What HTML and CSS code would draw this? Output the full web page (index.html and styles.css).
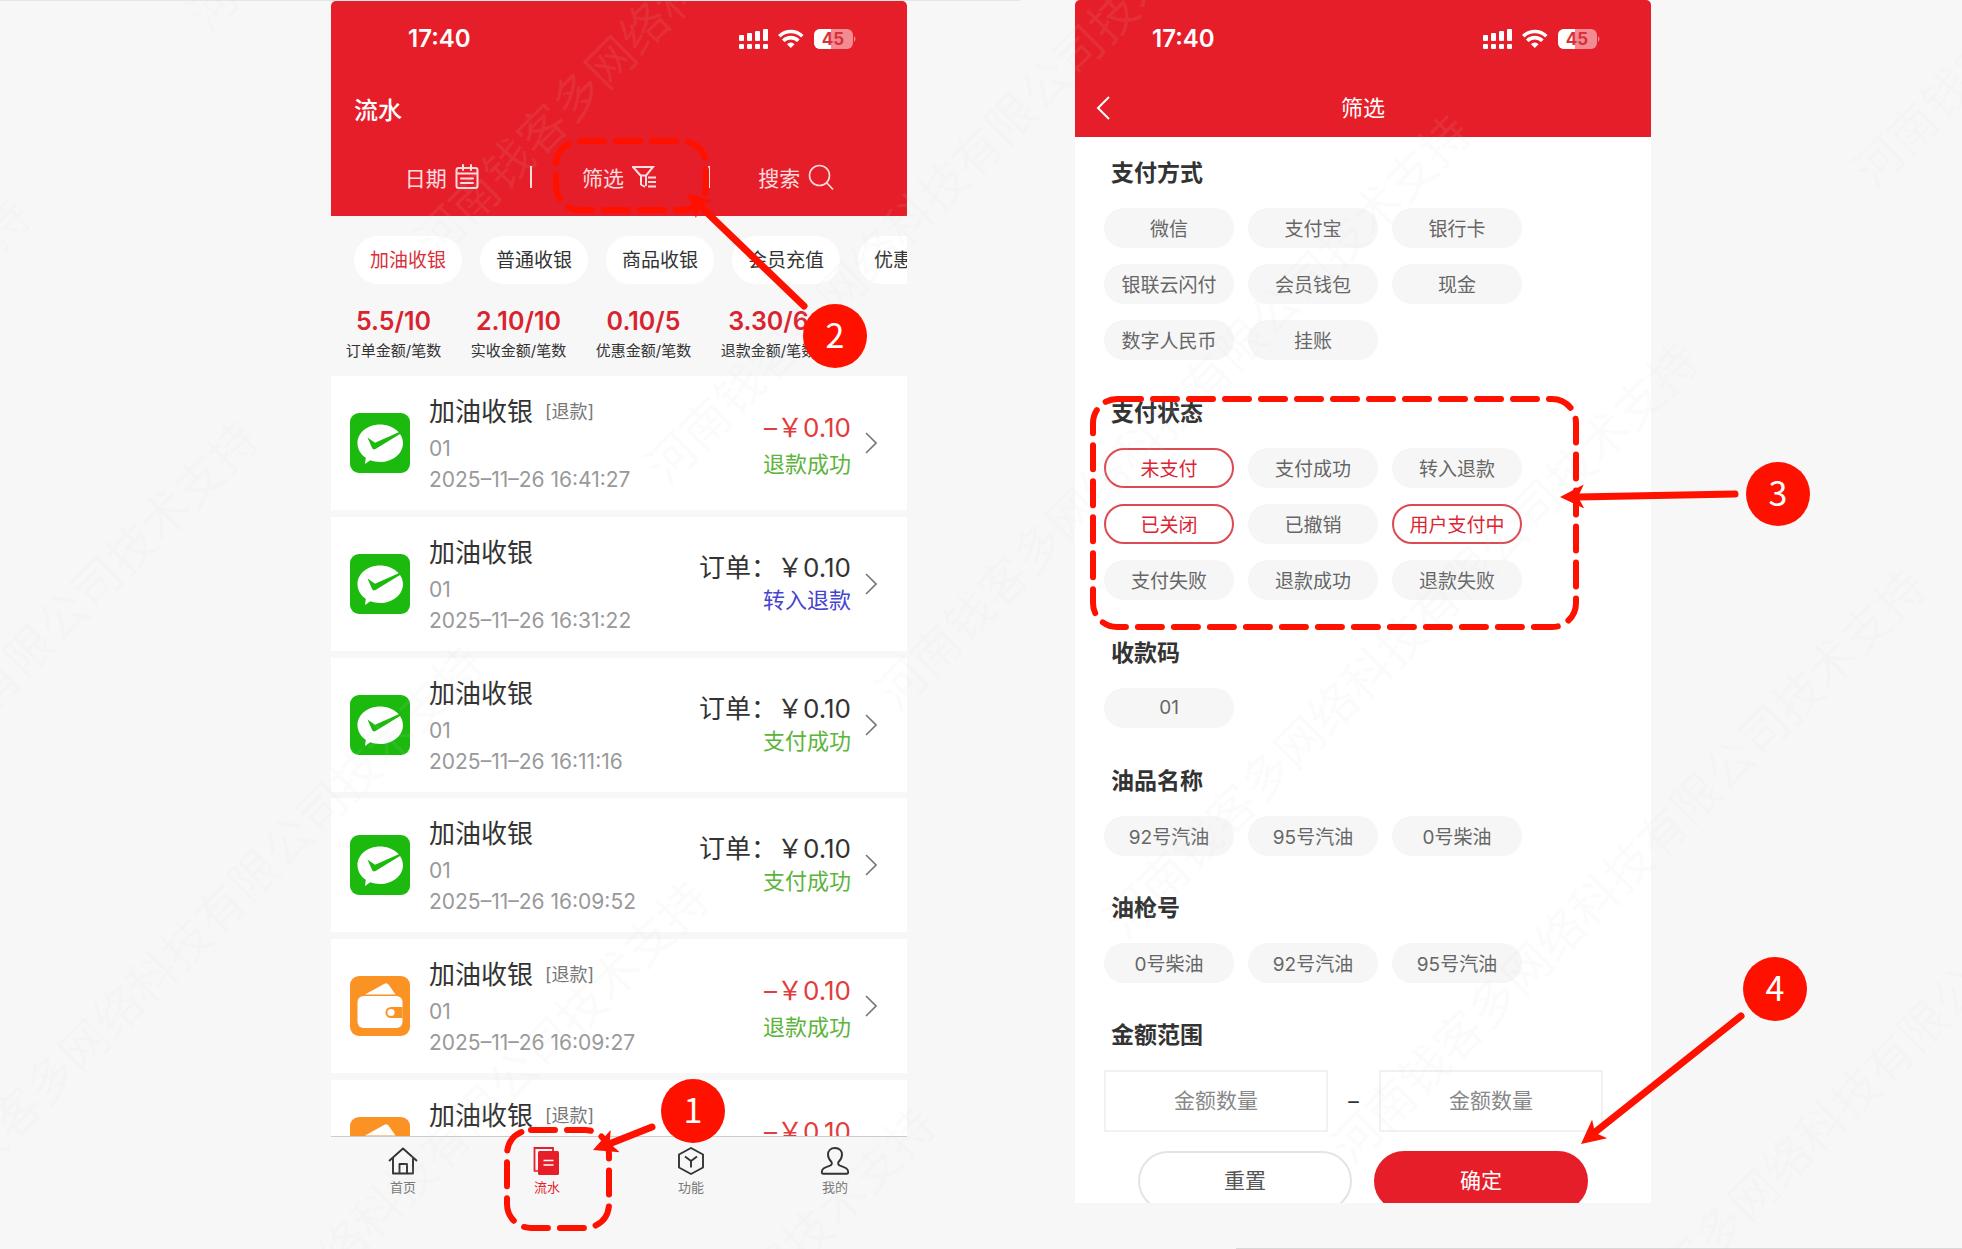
FILE: index.html
```html
<!DOCTYPE html>
<html lang="zh-CN">
<head>
<meta charset="utf-8">
<meta name="viewport" content="width=device-width, initial-scale=1">
<title>流水筛选</title>
<link rel="stylesheet" href="styles.css">
</head>
<body>
<svg class="defs" aria-hidden="true">
  <symbol id="status" viewBox="0 0 118 22">
    <g fill="#fff">
      <rect x="0" y="7" width="5" height="6" rx="1"/><rect x="8" y="5" width="5" height="8" rx="1"/><rect x="16" y="3" width="5" height="10" rx="1"/><rect x="24" y="1" width="5" height="12" rx="1"/>
      <rect x="0" y="16" width="5" height="5" rx="1"/><rect x="8" y="16" width="5" height="5" rx="1"/><rect x="16" y="16" width="5" height="5" rx="1"/><rect x="24" y="16" width="5" height="5" rx="1"/>
      <path d="M48 16.200a5 5 0 0 1 7.600 0L51.800 20z"/>
    </g>
    <g fill="none" stroke="#fff" stroke-width="3.600"><path d="M40.300 8.200a16.500 16.500 0 0 1 23 0"/><path d="M44.200 12.700a11 11 0 0 1 15.200 0"/></g>
    <rect x="75" y="1" width="39" height="20" rx="6" fill="#f38c92"/>
    <path d="M92 1H81a6 6 0 0 0-6 6v8a6 6 0 0 0 6 6h11z" fill="#fff"/>
    <path d="M115 8q3 3 0 6z" fill="#f38c92"/>
    <text x="94" y="17" text-anchor="middle" class="battery-text">45</text>
  </symbol>
  <symbol id="wechat" viewBox="0 0 60 60">
    <rect width="60" height="60" rx="9" fill="#1cb90f"/>
    <path d="M30 11.500c12.700 0 23 8.300 23 18.700S42.700 49 30 49c-3.500 0-6.700-.6-9.700-1.700L15 51l.8-6.200C10.700 41.400 7.500 36.200 7.500 30.200 7.500 19.800 17.300 11.500 30 11.500z" fill="#fff"/>
    <path d="M17.500 24.500l7.500 5.300 26-11.500-.2 2.200L25.500 36q-2.500 1.200-3.500-1.300z" fill="#1cb90f"/>
  </symbol>
  <symbol id="wallet" viewBox="0 0 60 60">
    <rect width="60" height="60" rx="9" fill="#fb9224"/>
    <path d="M15 18.500L34.500 7.800q2.800-1.300 4.300 1.200L45.500 18.500z" fill="#fff"/>
    <rect x="7.500" y="20" width="45" height="32" rx="6" fill="#fff"/>
    <path d="M52.500 31H41a5.500 5.500 0 0 0 0 11h11.500z" fill="#fb9224"/>
    <circle cx="41" cy="36.500" r="3.600" fill="#fff"/>
  </symbol>
  <symbol id="chevron" viewBox="0 0 12 22"><path d="M1 1l10 10L1 21" fill="none" stroke="#777" stroke-width="1.600"/></symbol>
  <symbol id="head" viewBox="0 0 24 24"><path d="M0 12L24 0L18 12L24 24z" fill="#f10"/></symbol>
</svg>

<main class="board">
  <section class="phone phone-list" aria-label="流水">
    <header class="header header-list">
      <div class="status"><span>17:40</span><svg width="118" height="22"><use href="#status"/></svg></div>
      <h1>流水</h1>
      <div class="tools">
        <button type="button">日期
          <svg width="24" height="26" viewBox="0 0 24 26" fill="none" stroke="#fff" stroke-width="2" stroke-linecap="round"><rect x="1.500" y="4" width="21" height="20" rx="2"/><path d="M2 9.500h20M8 1v5M16 1v5M6 14.500h12M6 19h12"/></svg></button>
        <button type="button">筛选
          <svg width="24" height="24" viewBox="0 0 24 24" fill="none" stroke="#fff" stroke-width="2"><path d="M13 22l-4-2.500V11L1 2h20l-7 8.500V21M8.500 10.500h6M16 12.500h8M16 17h8M16 21.500h8"/></svg></button>
        <button type="button">搜索
          <svg width="26" height="26" viewBox="0 0 26 26" fill="none" stroke="#fff" stroke-width="1.600"><circle cx="11.500" cy="11.500" r="10"/><path d="M18.500 18.500l6.500 7"/></svg></button>
      </div>
    </header>
    <div class="types">
      <button type="button" class="type on">加油收银</button><button type="button" class="type">普通收银</button><button type="button" class="type">商品收银</button><button type="button" class="type">会员充值</button><button type="button" class="type">优惠买单</button>
    </div>
    <dl class="stats">
      <div><dd>5.5/10</dd><dt>订单金额/笔数</dt></div>
      <div><dd>2.10/10</dd><dt>实收金额/笔数</dt></div>
      <div><dd>0.10/5</dd><dt>优惠金额/笔数</dt></div>
      <div><dd>3.30/6</dd><dt>退款金额/笔数</dt></div>
    </dl>
    <ul class="records">
      <li class="record"><svg class="pay"><use href="#wechat"/></svg>
        <div class="info"><h2>加油收银<small>[退款]</small></h2><p>01</p><time>2025–11–26 16:41:27</time></div>
        <div class="sum refund"><b>–￥0.10</b><span class="ok">退款成功</span></div><svg class="go"><use href="#chevron"/></svg></li>
      <li class="record"><svg class="pay"><use href="#wechat"/></svg>
        <div class="info"><h2>加油收银</h2><p>01</p><time>2025–11–26 16:31:22</time></div>
        <div class="sum"><b>订单：￥0.10</b><span class="moved">转入退款</span></div><svg class="go"><use href="#chevron"/></svg></li>
      <li class="record"><svg class="pay"><use href="#wechat"/></svg>
        <div class="info"><h2>加油收银</h2><p>01</p><time>2025–11–26 16:11:16</time></div>
        <div class="sum"><b>订单：￥0.10</b><span class="ok">支付成功</span></div><svg class="go"><use href="#chevron"/></svg></li>
      <li class="record"><svg class="pay"><use href="#wechat"/></svg>
        <div class="info"><h2>加油收银</h2><p>01</p><time>2025–11–26 16:09:52</time></div>
        <div class="sum"><b>订单：￥0.10</b><span class="ok">支付成功</span></div><svg class="go"><use href="#chevron"/></svg></li>
      <li class="record"><svg class="pay"><use href="#wallet"/></svg>
        <div class="info"><h2>加油收银<small>[退款]</small></h2><p>01</p><time>2025–11–26 16:09:27</time></div>
        <div class="sum refund"><b>–￥0.10</b><span class="ok">退款成功</span></div><svg class="go"><use href="#chevron"/></svg></li>
      <li class="record"><svg class="pay"><use href="#wallet"/></svg>
        <div class="info"><h2>加油收银<small>[退款]</small></h2></div>
        <div class="sum refund"><b>–￥0.10</b></div><svg class="go"><use href="#chevron"/></svg></li>
    </ul>
    <nav class="tabs">
      <a href="#home"><svg viewBox="0 0 30 28" fill="none" stroke="#333" stroke-width="1.900" stroke-linejoin="round"><path d="M1 14L15 1.500 29 14M5 11v15.500h20V11M11.500 26V17h7.500v9"/></svg>首页</a>
      <a href="#flow" class="on"><svg viewBox="0 0 30 28"><path d="M2.500 23V1H21v4" fill="none" stroke="#e61e29" stroke-width="1.800"/><path d="M2.500 22.500V24H6" fill="none" stroke="#e61e29" stroke-width="1.600"/><rect x="6" y="4" width="21" height="24" rx="1.500" fill="#e61e29"/><path d="M11.500 13.500h10M11.500 18h10" stroke="#fff" stroke-width="1.500"/></svg>流水</a>
      <a href="#feature"><svg viewBox="0 0 30 28" fill="none" stroke="#333" stroke-width="1.900" stroke-linejoin="round"><path d="M15 1l12 6.500v13L15 27 3 20.500v-13zM9 9.500l6 4.500 6-4.500M15 14v6.500"/></svg>功能</a>
      <a href="#me"><svg viewBox="0 0 30 28" fill="none" stroke="#333" stroke-width="1.900" stroke-linejoin="round"><path d="M15 1c-4.500 0-7 3-7 6.500 0 3 1.500 5.500 3.500 7.500.8 1.500.3 3-1.500 3.700C5 20.500 1.800 21.500 1.800 25c0 1.200.4 1.800 1.400 1.800h23.600c1 0 1.400-.6 1.400-1.800 0-3.500-3.200-4.500-8.200-6.300-1.800-.7-2.300-2.200-1.500-3.700 2-2 3.500-4.500 3.500-7.500C22 4 19.500 1 15 1z"/></svg>我的</a>
    </nav>
    <svg class="marks" aria-hidden="true"><g transform="translate(-331 -1)">
      <rect class="dash" x="556" y="141" width="150" height="69" rx="24"/>
      <path class="shaft" d="M804 306L699 205"/><use href="#head" width="24" height="24" transform="translate(687 193) rotate(44) translate(0 -12)"/>
      <circle class="ball" cx="835" cy="336" r="32"/><text class="num" x="835" y="348">2</text>
      <rect class="dash" x="507" y="1130" width="102" height="98" rx="24"/>
      <path class="shaft" d="M652 1127L609 1144"/><use href="#head" width="24" height="24" transform="translate(593 1150) rotate(-22) translate(0 -12)"/>
      <circle class="ball" cx="693" cy="1111" r="32"/><text class="num" x="693" y="1123">1</text>
    </g></svg>
  </section>

  <section class="phone phone-filter" aria-label="筛选">
    <header class="header header-filter">
      <div class="status"><span>17:40</span><svg width="118" height="22"><use href="#status"/></svg></div>
      <div class="bar"><button type="button" class="back" aria-label="返回"><svg width="14" height="24" viewBox="0 0 14 24"><path d="M13 1L2 12l11 11" fill="none" stroke="#fff" stroke-width="2"/></svg></button><h1>筛选</h1></div>
    </header>
    <form class="sheet">
      <fieldset><legend>支付方式</legend><div class="chips"><button type="button">微信</button><button type="button">支付宝</button><button type="button">银行卡</button><button type="button">银联云闪付</button><button type="button">会员钱包</button><button type="button">现金</button><button type="button">数字人民币</button><button type="button">挂账</button></div></fieldset>
      <fieldset><legend>支付状态</legend><div class="chips"><button type="button" aria-pressed="true">未支付</button><button type="button">支付成功</button><button type="button">转入退款</button><button type="button" aria-pressed="true">已关闭</button><button type="button">已撤销</button><button type="button" aria-pressed="true">用户支付中</button><button type="button">支付失败</button><button type="button">退款成功</button><button type="button">退款失败</button></div></fieldset>
      <fieldset><legend>收款码</legend><div class="chips"><button type="button">01</button></div></fieldset>
      <fieldset><legend>油品名称</legend><div class="chips"><button type="button">92号汽油</button><button type="button">95号汽油</button><button type="button">0号柴油</button></div></fieldset>
      <fieldset><legend>油枪号</legend><div class="chips"><button type="button">0号柴油</button><button type="button">92号汽油</button><button type="button">95号汽油</button></div></fieldset>
      <fieldset><legend>金额范围</legend><div class="range"><input type="text" placeholder="金额数量" aria-label="最低金额"><span>–</span><input type="text" placeholder="金额数量" aria-label="最高金额"></div></fieldset>
      <div class="actions"><button type="reset">重置</button><button type="submit">确定</button></div>
    </form>
    <svg class="marks" aria-hidden="true"><g transform="translate(-1075 0)">
      <rect class="dash" x="1093" y="399" width="483" height="228" rx="24"/>
      <path class="shaft" d="M1735 494L1577 497"/><use href="#head" width="24" height="24" transform="translate(1560 497) rotate(-1) translate(0 -12)"/>
      <circle class="ball" cx="1778" cy="494" r="32"/><text class="num" x="1778" y="506">3</text>
      <path class="shaft" d="M1741 1016L1594 1133"/><use href="#head" width="24" height="24" transform="translate(1581 1144) rotate(-39) translate(0 -12)"/>
      <circle class="ball" cx="1775" cy="989" r="32"/><text class="num" x="1775" y="1001">4</text>
    </g></svg>
  </section>
</main>

<svg class="watermark" aria-hidden="true">
  <text transform="translate(1649 -67) rotate(-45)" x="-24" y="20">河南钱客多网络科技有限公司技术支持</text>
  <text transform="translate(1877 160) rotate(-45)" x="-24" y="20">河南钱客多网络科技有限公司技术支持</text>
  <text transform="translate(211 4) rotate(-45)" x="-24" y="20">河南钱客多网络科技有限公司技术支持</text>
  <text transform="translate(439 230) rotate(-45)" x="-24" y="20">河南钱客多网络科技有限公司技术支持</text>
  <text transform="translate(670 456) rotate(-45)" x="-24" y="20">河南钱客多网络科技有限公司技术支持</text>
  <text transform="translate(900 682) rotate(-45)" x="-24" y="20">河南钱客多网络科技有限公司技术支持</text>
  <text transform="translate(1128 910) rotate(-45)" x="-24" y="20">河南钱客多网络科技有限公司技术支持</text>
  <text transform="translate(1355 1136) rotate(-45)" x="-24" y="20">河南钱客多网络科技有限公司技术支持</text>
  <text transform="translate(1582 1363) rotate(-45)" x="-24" y="20">河南钱客多网络科技有限公司技术支持</text>
  <text transform="translate(-540 765) rotate(-45)" x="-24" y="20">河南钱客多网络科技有限公司技术支持</text>
  <text transform="translate(-312 988) rotate(-45)" x="-24" y="20">河南钱客多网络科技有限公司技术支持</text>
  <text transform="translate(-87 1213) rotate(-45)" x="-24" y="20">河南钱客多网络科技有限公司技术支持</text>
  <text transform="translate(138 1448) rotate(-45)" x="-24" y="20">河南钱客多网络科技有限公司技术支持</text>
  <text transform="translate(365 1674) rotate(-45)" x="-24" y="20">河南钱客多网络科技有限公司技术支持</text>
</svg>
</body>
</html>
```
FILE: styles.css
```css
* { box-sizing: border-box; margin: 0; padding: 0; }
body {
  background: #f7f7f7;
  color: #333;
  font: 400 21px Inter, "Noto Sans CJK SC", sans-serif;
  overflow: hidden;
}
button, input { font: inherit; color: inherit; border: 0; background: none; }
h1, h2 { font-weight: 400; }
.defs { position: absolute; width: 0; height: 0; }
.battery-text { font: 700 17px Inter, sans-serif; fill: #d9303a; }

.board {
  display: grid;
  grid-template-columns: 1fr 1fr;
  column-gap: 168px;
  padding: 0 311px 0 331px;
  background: linear-gradient(#e6e6e6, #e6e6e6) 0 0 / 52% 1px no-repeat, linear-gradient(#d8d8d8, #d8d8d8) 100% 100% / 37% 1px no-repeat;
}
.phone { position: relative; display: flex; flex-direction: column; height: 100vh; min-width: 0; }
.phone-list { padding-top: 1px; }
.marks { position: absolute; left: 0; top: 1px; width: 100%; height: 100%; overflow: visible; pointer-events: none; z-index: 3; }
.phone-filter .marks { top: 0; }
.dash { fill: none; stroke: #f10; stroke-width: 6; stroke-linecap: round; stroke-dasharray: 24 12; }
.shaft { stroke: #f10; stroke-width: 7; stroke-linecap: round; }
.ball { fill: #f10; }
.num { fill: #fff; font: 400 34px "Noto Sans CJK SC", sans-serif; text-anchor: middle; }

.header { flex: none; background: #e61e29; color: #fff; border-radius: 5px 5px 0 0; }
.status {
  display: flex; justify-content: space-between; align-items: center;
  padding: 0 50px 0 77px;
  font-size: 24px; font-weight: 600; line-height: 30px;
}
.header-list { padding: 23px 0 24px; }
.header-list h1 { margin: 39px 0 33px 23px; font-size: 24px; line-height: 36px; font-weight: 500; }
.tools { display: grid; grid-template-columns: repeat(3, 1fr); padding: 0 22px; }
.tools button { position: relative; display: flex; justify-content: center; align-items: center; gap: 8px; height: 30px; opacity: .85; }
.tools button + button::before { content: ""; position: absolute; left: 0; top: 4px; width: 2px; height: 22px; background: #fff; }

.types { flex: none; display: flex; gap: 18px; padding: 20px 0 20px 23px; overflow: hidden; }
.type { flex: none; width: 108px; height: 48px; padding-bottom: 3px; border-radius: 24px; background: #fff; font-size: 19px; white-space: nowrap; }
.type.on { color: #d9303a; }
.stats { flex: none; display: flex; height: 72px; }
.stats div { display: flex; flex-direction: column; width: 125px; text-align: center; }
.stats dd { font-size: 25px; font-weight: 600; line-height: 35px; color: #d9232e; }
.stats dt { font-size: 15px; line-height: 24px; white-space: nowrap; }

.records { flex: 1; min-height: 0; overflow: hidden; list-style: none; }
.record { display: flex; align-items: center; height: 134px; margin-bottom: 7px; padding: 0 30px 0 19px; background: #fff; }
.record:nth-child(3n) { margin-bottom: 6px; }
.pay { flex: none; width: 60px; height: 60px; margin-right: 19px; }
.info { flex: 1; height: 102px; color: #999; }
.info h2 { display: flex; gap: 12px; font-size: 26px; line-height: 40px; color: #333; }
.info small { font-size: 18px; color: #777; }
.info p { line-height: 34px; }
.info time { display: block; line-height: 28px; }
.sum { display: flex; flex-direction: column; text-align: right; line-height: 32px; }
.sum b { font-size: 26px; font-weight: 400; }
.sum span { font-size: 22px; }
.sum.refund { padding-top: 6px; line-height: 36px; min-height: 78px; }
.refund b { color: #e23c3c; }
.ok { color: #5cb43a; }
.moved { color: #4444cf; }
.go { flex: none; width: 12px; height: 22px; margin-left: 14px; }

.tabs { flex: none; display: grid; grid-template-columns: repeat(4, 1fr); height: 113px; padding-top: 10px; border-top: 1px solid #ccc; background: #f7f7f7; }
.tabs a { display: flex; flex-direction: column; align-items: center; gap: 2px; font-size: 13px; line-height: 20px; color: #777; text-decoration: none; }
.tabs svg { width: 30px; height: 28px; }
.tabs .on { color: #e61e29; }

.header-filter { padding: 24px 0 11px; }
.bar { display: grid; grid-template-columns: 56px 1fr 56px; align-items: center; margin-top: 36px; }
.back { height: 24px; line-height: 0; }
.bar h1 { font-size: 22px; line-height: 36px; text-align: center; }
.sheet { flex: 1; min-height: 0; overflow: hidden; margin-bottom: 46px; padding: 20px 48px 0 29px; background: #fff; }
fieldset { border: 0; margin-bottom: 37px; }
legend { padding-left: 7px; font-size: 23px; font-weight: 600; line-height: 32px; margin-bottom: 19px; }
.chips { display: flex; flex-wrap: wrap; gap: 16px 14px; padding-right: 60px; }
.chips button { width: 130px; height: 40px; padding-bottom: 1px; border-radius: 20px; background: #f6f6f6; color: #666; font-size: 19px; white-space: nowrap; }
.chips button[aria-pressed="true"] { border: 2px solid #dc4a52; background: #fff; color: #dc2430; }
fieldset:nth-of-type(n+4) { margin-bottom: 36px; }
.range { display: grid; grid-template-columns: 1fr 51px 1fr; align-items: center; text-align: center; }
.range input { width: 100%; min-width: 0; height: 62px; padding-bottom: 2px; border: 2px solid #f1f1f1; text-align: center; }
.range input::placeholder { color: #888; opacity: 1; }
fieldset:nth-of-type(6) { margin-bottom: 19px; }
.actions { display: grid; grid-template-columns: 1fr 1fr; gap: 22px; padding: 0 15px 0 34px; }
.actions button { height: 60px; padding-bottom: 4px; border-radius: 30px; border: 2px solid #e4e4e4; color: #555; }
.actions [type="submit"] { border-color: #e61e29; background: #e61e29; color: #fff; }

.watermark { position: absolute; inset: 0; width: 100%; height: 100%; z-index: 2; overflow: hidden; pointer-events: none; }
.watermark text { font: 400 48px "Noto Sans CJK SC", sans-serif; fill: rgba(215, 215, 215, .09); }
```
